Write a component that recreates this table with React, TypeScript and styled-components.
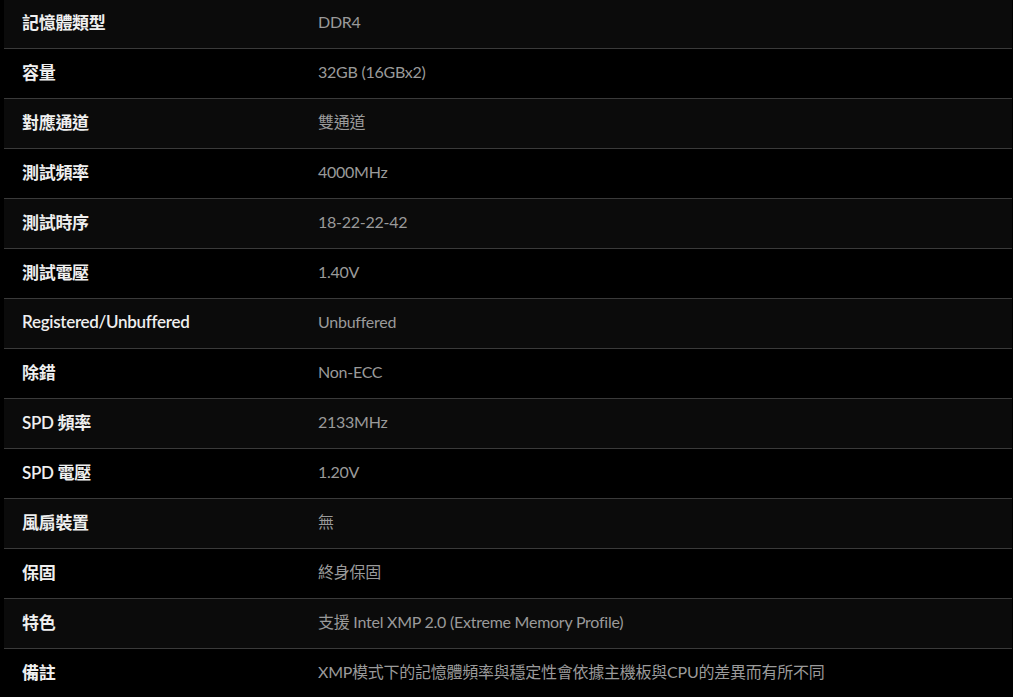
import React from "react";
import styled, { createGlobalStyle } from "styled-components";

const Global = createGlobalStyle`
  html, body {
    margin: 0;
    padding: 0;
    background: #000;
  }
  body {
    font-family: "Lato", "Noto Sans CJK TC", sans-serif;
  }
`;

const Page = styled.div`
  background: #000;
  padding: 0 1px 0 4px;
  margin-top: -1px;
`;

const Table = styled.div`
  display: flex;
  flex-direction: column;
`;

const Row = styled.div<{ $shade: boolean }>`
  box-sizing: border-box;
  display: grid;
  grid-template-columns: 314px 1fr;
  align-items: center;
  height: 50px;
  padding-bottom: 5px;
  border-bottom: 1px solid #3a3a3a;
  background: ${(p) => (p.$shade ? "#0b0b0b" : "#000")};
`;

const Label = styled.div`
  padding-left: 18px;
  color: #efefef;
  font-family: "Lato", "Noto Sans CJK TC", sans-serif;
  font-weight: 600;
  font-size: 17px;
  letter-spacing: -0.3px;
  white-space: nowrap;
`;

const Value = styled.div`
  color: #9a9a9a;
  font-family: "Lato", "Noto Sans CJK TC", sans-serif;
  font-weight: 400;
  font-size: 16px;
  letter-spacing: -0.25px;
  white-space: nowrap;
`;

const specs: [string, string][] = [
  ["記憶體類型", "DDR4"],
  ["容量", "32GB (16GBx2)"],
  ["對應通道", "雙通道"],
  ["測試頻率", "4000MHz"],
  ["測試時序", "18-22-22-42"],
  ["測試電壓", "1.40V"],
  ["Registered/Unbuffered", "Unbuffered"],
  ["除錯", "Non-ECC"],
  ["SPD 頻率", "2133MHz"],
  ["SPD 電壓", "1.20V"],
  ["風扇裝置", "無"],
  ["保固", "終身保固"],
  ["特色", "支援 Intel XMP 2.0 (Extreme Memory Profile)"],
  ["備註", "XMP模式下的記憶體頻率與穩定性會依據主機板與CPU的差異而有所不同"],
];

export default function App() {
  return (
    <>
      <Global />
      <Page>
        <Table>
          {specs.map(([k, v], i) => (
            <Row key={k} $shade={i % 2 === 0}>
              <Label>{k}</Label>
              <Value>{v}</Value>
            </Row>
          ))}
        </Table>
      </Page>
    </>
  );
}
